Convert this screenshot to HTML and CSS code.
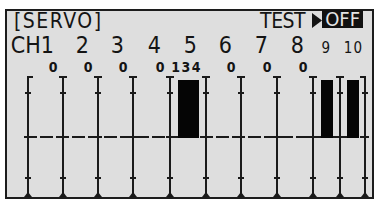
FILE: index.html
```html
<!DOCTYPE html>
<html lang="en">
<head>
    <meta charset="UTF-8">
    <title>Servo monitor</title>
    <link rel="stylesheet" href="styles.css">
</head>
<body>
    <div class="lcd">
        <div class="head">
            <span class="title">[SERVO]</span>
            <div class="mode">
                <span class="test">TEST</span>
                <svg class="arrow" width="10" height="15" viewBox="0 0 10 15"><path d="M0 0L10 7.5L0 15Z"/></svg>
                <span class="off">OFF</span>
            </div>
        </div>

        <div class="row channels">
            <span>CH1</span>
            <span>2</span>
            <span>3</span>
            <span>4</span>
            <span>5</span>
            <span>6</span>
            <span>7</span>
            <span>8</span>
            <span class="small">9</span>
            <span class="small">10</span>
        </div>

        <div class="row values">
            <span>0</span>
            <span>0</span>
            <span>0</span>
            <span>0</span>
            <span>134</span>
            <span>0</span>
            <span>0</span>
            <span>0</span>
            <span></span>
            <span></span>
        </div>

        <!-- bar scales, one per channel column -->
        <svg class="chart" width="365" height="124" viewBox="7 73 365 124">
            <defs>
                <g id="scale">
                    <rect x="-1" y="77" width="2" height="120"/>
                    <rect x="-3" y="92" width="6" height="2"/>
                    <rect x="-4" y="136" width="8" height="2"/>
                    <rect x="-3" y="177" width="6" height="2"/>
                    <path d="M-4 197L0 192L4 197Z"/>
                </g>
            </defs>
            <line class="mid" x1="24" y1="137" x2="366" y2="137"/>

            <use href="#scale" x="28"/>
            <use href="#scale" x="63"/>
            <use href="#scale" x="98"/>
            <use href="#scale" x="133"/>
            <use href="#scale" x="170"/>
            <use href="#scale" x="206"/>
            <use href="#scale" x="241"/>
            <use href="#scale" x="277"/>
            <use href="#scale" x="313"/>
            <use href="#scale" x="340"/>
            <use href="#scale" x="365"/>

            <rect x="27" y="76" width="6" height="2"/>
            <rect x="59" y="76" width="8" height="2"/>
            <rect x="94" y="76" width="8" height="2"/>
            <rect x="129" y="76" width="8" height="2"/>
            <rect x="166" y="76" width="8" height="2"/>
            <rect x="202" y="76" width="8" height="2"/>
            <rect x="237" y="76" width="8" height="2"/>
            <rect x="273" y="76" width="8" height="2"/>
            <rect x="309" y="76" width="8" height="2"/>
            <rect x="336" y="76" width="8" height="2"/>
            <rect x="360" y="76" width="6" height="2"/>

            <rect class="bar" x="178" y="80" width="21" height="58"/>
            <rect class="bar" x="321" y="80" width="12" height="58"/>
            <rect class="bar" x="347" y="80" width="12" height="58"/>
        </svg>
    </div>
</body>
</html>
```

FILE: styles.css
```css
body {
    margin: 0;
    background: #ffffff;
}
.lcd {
    margin: 9px 0 0 5px;
    width: 365px;
    height: 186px;
    border: 2px solid #1c1c1c;
    background: #dedede;
    color: #141414;
    font-family: "DejaVu Sans Condensed", "DejaVu Sans", sans-serif;
    font-stretch: condensed;
}
.head {
    display: flex;
    justify-content: space-between;
    height: 20px;
    padding: 0 9px 0 7px;
    font-size: 21px;
    line-height: 20px;
}
.title {
    letter-spacing: 1.5px;
}
.mode {
    display: flex;
    align-items: flex-start;
}
.test {
    letter-spacing: -0.5px;
}
.arrow {
    margin: 2px 0 0 7px;
    fill: #141414;
}
.off {
    display: block;
    height: 18px;
    margin-top: -1px;
    padding: 0 3px;
    background: #111;
    color: #e4e4e4;
    font-size: 20px;
    line-height: 18px;
}
.row {
    display: grid;
    grid-template-columns: 56px 35px 35px 37px 36px 35px 36px 36px 27px 32px;
    align-items: baseline;
    text-align: right;
}
.channels {
    height: 20px;
    margin-top: 4px;
    font-size: 23px;
    line-height: 20px;
}
.channels span {
    padding-right: 9px;
}
.channels .small {
    font-size: 15px;
    letter-spacing: 1px;
}
.values {
    height: 12px;
    margin-top: 6px;
    font-size: 14px;
    font-weight: bold;
    line-height: 12px;
    letter-spacing: 1.5px;
}
.values span {
    padding-right: 4px;
}
.chart {
    display: block;
    fill: #1a1a1a;
}
.mid {
    stroke: #1a1a1a;
    stroke-width: 2;
    stroke-dasharray: 13 3;
}
.bar {
    fill: #050505;
}
```
